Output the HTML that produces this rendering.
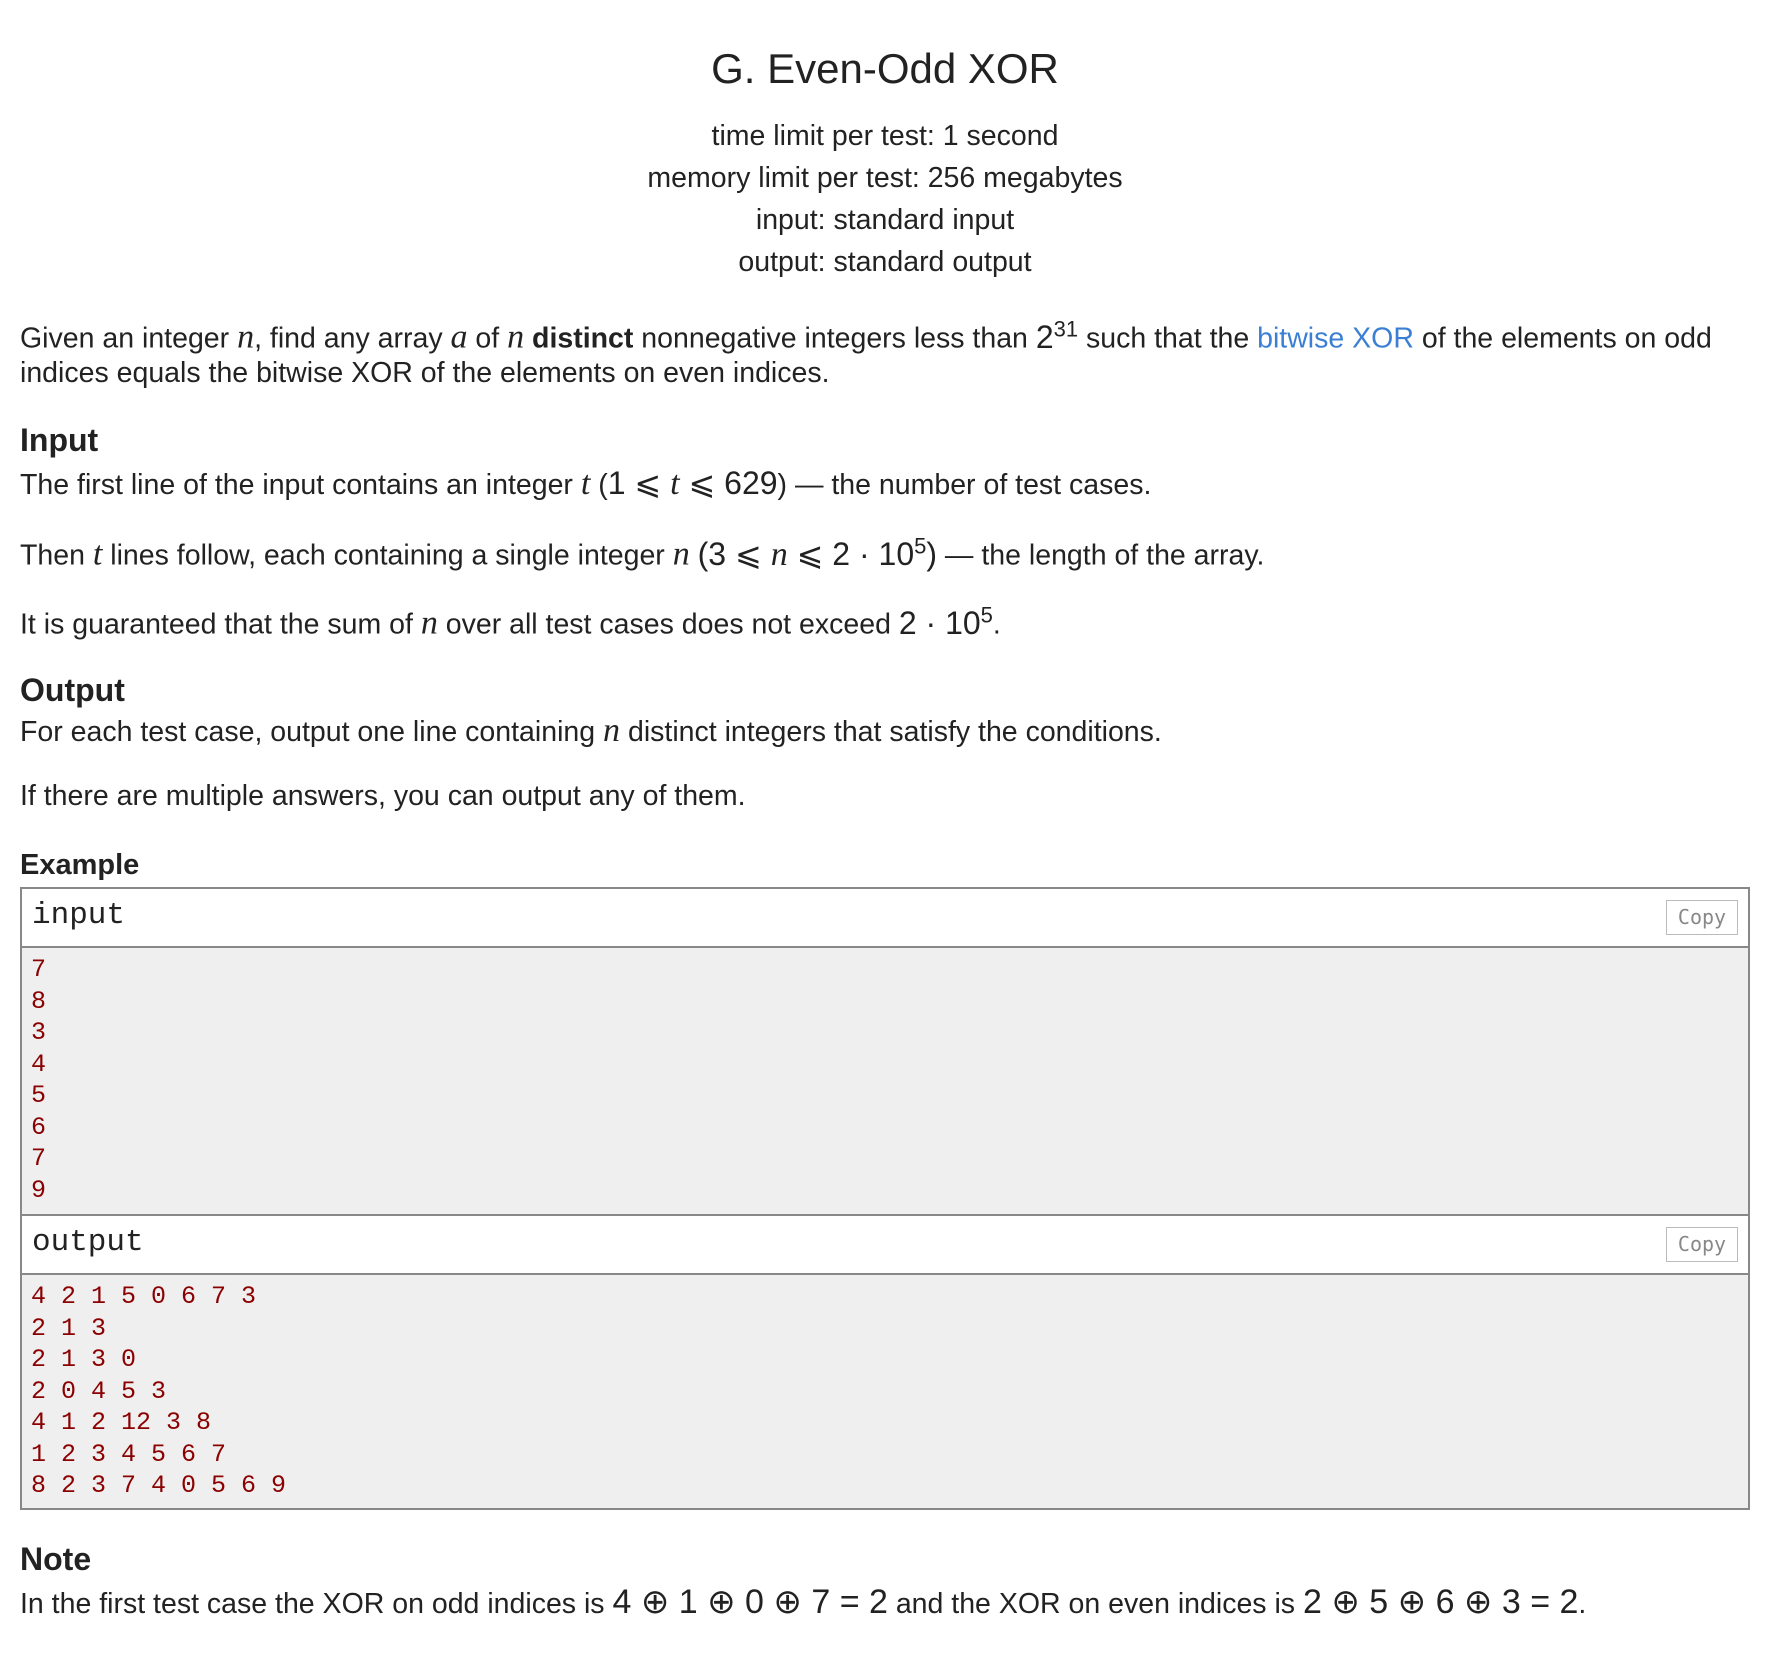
<!DOCTYPE html>
<html><head><meta charset="utf-8"><style>
body{margin:0;background:#fff;color:#222;font-family:"Liberation Sans",sans-serif;font-size:28.5px;}
.abs{position:absolute;white-space:nowrap;}
.c{left:0;width:1770px;text-align:center;}
.m{font-family:"Liberation Serif",serif;font-style:italic;font-size:34px;}
.n{font-size:32px;}
.nn{font-size:34px;}
h3{margin:0;font-size:32px;font-weight:bold;}
.box{position:absolute;left:20px;top:887px;width:1726px;height:619px;border:2px solid #888;}
.hd{position:absolute;left:0;width:1726px;background:#fff;font-family:"Liberation Mono",monospace;font-size:31px;}
.hd span{position:absolute;left:10px;}
.copy{position:absolute;right:10px;width:72px;height:35px;border:1.5px solid #bbb;font-family:"DejaVu Sans Mono",monospace;font-size:20px;color:#888;text-align:center;line-height:33px;box-sizing:border-box;}
.bd{position:absolute;left:0;width:1726px;background:#efefef;font-family:"Liberation Mono",monospace;font-size:25px;color:#8b0000;line-height:31.5px;border-top:2px solid #888;border-bottom:2px solid #888;box-sizing:border-box;padding:6px 0 0 9px;white-space:pre;}
</style></head><body>
<div class="abs c" style="top:45px;font-size:42px;">G. Even-Odd XOR</div>
<div class="abs c" style="top:120px;">time limit per test: 1 second</div>
<div class="abs c" style="top:162px;">memory limit per test: 256 megabytes</div>
<div class="abs c" style="top:204px;">input: standard input</div>
<div class="abs c" style="top:246px;">output: standard output</div>
<div class="abs" style="left:20px;top:316px;">Given an integer <span class="m">n</span>, find any array <span class="m">a</span> of <span class="m">n</span> <b>distinct</b> nonnegative integers less than <span class="n">2<sup style="font-size:22px">31</sup></span> such that the <span style="color:#3b7fd4">bitwise XOR</span> of the elements on odd</div>
<div class="abs" style="left:20px;top:357px;">indices equals the bitwise XOR of the elements on even indices.</div>
<h3 class="abs" style="left:20px;top:422px;">Input</h3>
<div class="abs" style="left:20px;top:464px;">The first line of the input contains an integer <span class="m">t</span> (<span class="n">1 ⩽ <span class="m">t</span> ⩽ 629</span>) — the number of test cases.</div>
<div class="abs" style="left:20px;top:533px;">Then <span class="m">t</span> lines follow, each containing a single integer <span class="m">n</span> <span class="n">(3 ⩽ <span class="m">n</span> ⩽ 2 · 10<sup style="font-size:22px">5</sup>)</span> — the length of the array.</div>
<div class="abs" style="left:20px;top:602px;">It is guaranteed that the sum of <span class="m">n</span> over all test cases does not exceed <span class="n">2 · 10<sup style="font-size:22px">5</sup></span>.</div>
<h3 class="abs" style="left:20px;top:672px;">Output</h3>
<div class="abs" style="left:20px;top:712px;">For each test case, output one line containing <span class="m">n</span> distinct integers that satisfy the conditions.</div>
<div class="abs" style="left:20px;top:780px;">If there are multiple answers, you can output any of them.</div>
<div class="abs" style="left:20px;top:849px;font-weight:bold;font-size:29px;">Example</div>
<div class="box">
<div class="hd" style="top:0;height:57px;"><span style="top:9px;">input</span><div class="copy" style="top:11px;">Copy</div></div>
<div class="bd" style="top:57px;height:270px;">7
8
3
4
5
6
7
9</div>
<div class="hd" style="top:327px;height:57px;"><span style="top:9px;">output</span><div class="copy" style="top:11px;">Copy</div></div>
<div class="bd" style="top:384px;height:235px;border-bottom:none;">4 2 1 5 0 6 7 3
2 1 3
2 1 3 0
2 0 4 5 3
4 1 2 12 3 8
1 2 3 4 5 6 7
8 2 3 7 4 0 5 6 9</div>
</div>
<h3 class="abs" style="left:20px;top:1541px;">Note</h3>
<div class="abs" style="left:20px;top:1582px;">In the first test case the XOR on odd indices is <span class="nn">4 ⊕ 1 ⊕ 0 ⊕ 7 = 2</span> and the XOR on even indices is <span class="nn">2 ⊕ 5 ⊕ 6 ⊕ 3 = 2</span>.</div>
</body></html>
